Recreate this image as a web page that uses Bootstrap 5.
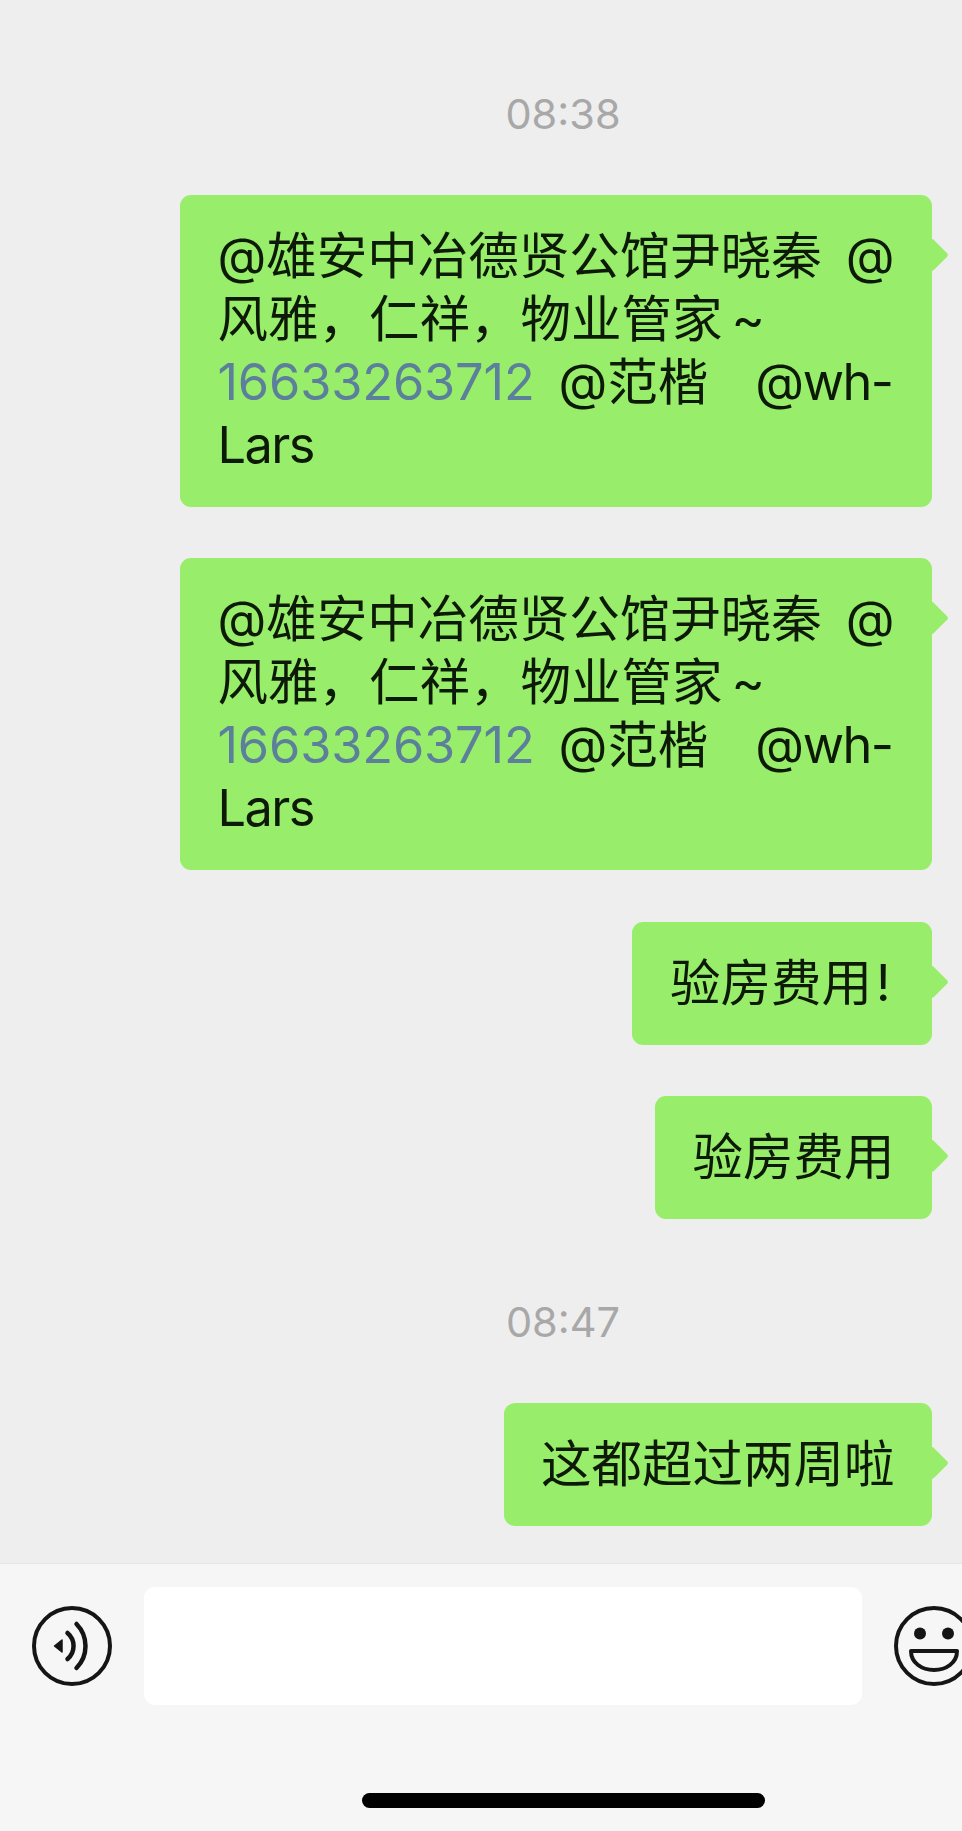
<!DOCTYPE html>
<html lang="zh">
<head>
<meta charset="utf-8">
<title>Chat</title>
<link href="https://cdn.jsdelivr.net/npm/bootstrap@5.3.0/dist/css/bootstrap.min.css" rel="stylesheet">
<style>
html, body { height: 1831px; overflow: hidden; }
body { background: #eeeeee; font-family: Inter, "Noto Sans CJK SC", sans-serif; color: #0d1a08; }
.phone { width: 962px; height: 1831px; overflow: hidden; }
.chat-area { height: 1563px; padding: 84px 30px 0 0; }
.stamp { padding-left: 194px; height: 60px; line-height: 60px; font-size: 41.5px; color: #a8a8a8; margin-bottom: 51px; }
.stamp-later { margin-top: 73px; margin-bottom: 51px; }
.msg { margin-bottom: 51px; }
.msg-wide { margin-bottom: 52px; }
.bubble { position: relative; background: #98ee6b; padding: 29px 37.5px 31px; font-size: 50.5px; line-height: 63px; border-radius: 11px; white-space: nowrap; }
.bubble::after { content: ""; position: absolute; right: -12px; top: 48px; width: 24px; height: 24px; background: #98ee6b; border-radius: 3px; transform: rotate(45deg); }
.tel { color: #5c7f9c; letter-spacing: -.15px; }
.lat { letter-spacing: -1.5px; }
.gap-s { margin-left: 24px; }
.gap-l { margin-left: 47px; }
.tilde { margin-left: 9px; }
.bang { margin-left: 4px; margin-right: 4px; }
.foot { height: 268px; background: #f6f6f6; border-top: 1px solid #e6e6e6; padding: 23px 0 0 32px; }
.entry { width: 718px; height: 118px; background: #fff; border-radius: 11px; flex: none; }
.glyph { flex: none; width: 80px; height: 80px; }
.inputs { gap: 32px; width: 930px; overflow: hidden; }
.homebar-wrap { padding-right: 32px; margin-top: 88px; padding-left: 330px; }
.homebar { width: 403px; height: 15px; background: #000; border-radius: 8px; }
</style>
</head>
<body>
<div class="phone d-flex flex-column">
  <main class="chat-area">
    <div class="stamp text-center">08:38</div>
    <div class="msg d-flex justify-content-end">
      <div class="bubble">@雄安中冶德贤公馆尹晓秦<span class="gap-s">@</span><br>风雅，仁祥，物业管家<span class="tilde">~</span><br><span class="tel">16633263712</span><span class="gap-s">@</span>范楷<span class="gap-l lat">@wh-</span><br><span class="lat">Lars</span></div>
    </div>
    <div class="msg-wide d-flex justify-content-end">
      <div class="bubble">@雄安中冶德贤公馆尹晓秦<span class="gap-s">@</span><br>风雅，仁祥，物业管家<span class="tilde">~</span><br><span class="tel">16633263712</span><span class="gap-s">@</span>范楷<span class="gap-l lat">@wh-</span><br><span class="lat">Lars</span></div>
    </div>
    <div class="msg d-flex justify-content-end">
      <div class="bubble">验房费用<span class="bang">!</span></div>
    </div>
    <div class="d-flex justify-content-end">
      <div class="bubble">验房费用</div>
    </div>
    <div class="stamp stamp-later text-center">08:47</div>
    <div class="d-flex justify-content-end">
      <div class="bubble">这都超过两周啦</div>
    </div>
  </main>
  <footer class="foot">
    <div class="inputs d-flex align-items-center">
      <svg class="glyph" viewBox="0 0 80 80" fill="none" stroke="#151515" stroke-width="4" aria-label="voice">
        <circle cx="40" cy="40" r="38"/>
        <path d="M22.5 40L30 34V46Z" fill="#151515" stroke-width="1.5" stroke-linejoin="round"/>
        <path d="M35.5 27A17 17 0 0 1 35.5 53" stroke-width="4.5" stroke-linecap="round"/>
        <path d="M44.5 18A31.4 31.4 0 0 1 44.5 62" stroke-width="4.5" stroke-linecap="round"/>
      </svg>
      <div class="entry"></div>
      <svg class="glyph" viewBox="0 0 80 80" fill="none" stroke="#151515" stroke-width="4" aria-label="emoji">
        <circle cx="40" cy="40" r="38"/>
        <circle cx="26" cy="27.5" r="6" fill="#151515" stroke="none"/>
        <circle cx="54" cy="27.5" r="6" fill="#151515" stroke="none"/>
        <path d="M17 45H63C63 57 52 64 40 64C28 64 17 57 17 45Z" stroke-linejoin="round"/>
      </svg>
    </div>
    <div class="homebar-wrap"><div class="homebar"></div></div>
  </footer>
</div>
<script src="https://cdn.jsdelivr.net/npm/bootstrap@5.3.0/dist/js/bootstrap.bundle.min.js"></script>
</body>
</html>
